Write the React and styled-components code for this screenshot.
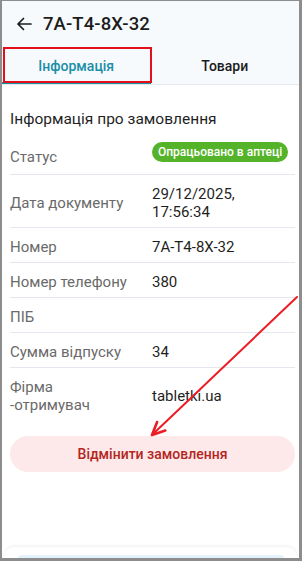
import React from 'react';
import styled, { createGlobalStyle } from 'styled-components';

const GlobalStyle = createGlobalStyle`
  html, body {
    margin: 0;
    padding: 0;
    background: #ffffff;
  }
  body {
    font-family: Roboto, 'Noto Sans', 'Liberation Sans', sans-serif;
    -webkit-font-smoothing: antialiased;
  }
`;

const rows = [
  { label: 'Дата документу', value: '29/12/2025,\n17:56:34' },
  { label: 'Номер', value: '7A-T4-8X-32' },
  { label: 'Номер телефону', value: '380' },
  { label: 'ПІБ', value: '' },
  { label: 'Сумма відпуску', value: '34' },
  { label: 'Фірма\n-отримувач', value: 'tabletki.ua' },
];

const ArrowLeft = () => (
  <svg width="16" height="16" viewBox="0 0 16 16" fill="none">
    <path d="M15 8H2M7.5 2.5L2 8l5.5 5.5" stroke="#1c1c1c" strokeWidth="1.7" strokeLinecap="round" strokeLinejoin="round" />
  </svg>
);

const App = () => {
  return (
    <>
      <GlobalStyle />
      <Frame>
        <Header>
          <TitleRow>
            <ArrowLeft />
            <Title>7A-T4-8X-32</Title>
          </TitleRow>
          <Tabs>
            <Tab $active>
              Інформація
              <Highlight />
            </Tab>
            <Tab>Товари</Tab>
          </Tabs>
        </Header>

        <Content>
          <SectionTitle>Інформація про замовлення</SectionTitle>
          <List>
            <StatusRow>
              <Label>Статус</Label>
              <Badge>Опрацьовано в аптеці</Badge>
            </StatusRow>
            {rows.map((r, i) => (
              <Row key={i} $last={i === rows.length - 1}>
                <Label>{r.label}</Label>
                <Value>{r.value}</Value>
              </Row>
            ))}
          </List>
          <CancelButton>Відмінити замовлення</CancelButton>
        </Content>

        <BottomCard>
          <BottomBar />
        </BottomCard>

        <Annotation width="297" height="557" viewBox="0 0 297 557">
          <line x1="295" y1="296" x2="151" y2="433" stroke="#ec1c24" strokeWidth="2" strokeLinecap="round" />
          <polyline points="163.3,429.5 150,434 155.1,421" fill="none" stroke="#ec1c24" strokeWidth="2.6" strokeLinecap="round" strokeLinejoin="round" />
        </Annotation>
      </Frame>
    </>
  );
};

const Frame = styled.div`
  position: relative;
  box-sizing: border-box;
  width: 302px;
  height: 561px;
  border-style: solid;
  border-color: #8d8d8d;
  border-width: 1px 3px 3px 2px;
  background: #ffffff;
  display: flex;
  flex-direction: column;
  overflow: hidden;
`;

const Header = styled.div`
  background: #f6fafd;
  border-bottom: 1px solid #e6e9ee;
`;

const TitleRow = styled.div`
  height: 46px;
  display: flex;
  align-items: center;
  gap: 11px;
  padding-left: 14px;
  box-sizing: border-box;
  padding-bottom: 1px;
`;

const Title = styled.div`
  font-size: 18.5px;
  font-weight: 500;
  color: #1c1c1c;
  letter-spacing: 0.1px;
`;

const Tabs = styled.div`
  display: grid;
  grid-template-columns: 1fr 1fr;
  height: 37px;
`;

const Tab = styled.div`
  position: relative;
  display: flex;
  align-items: center;
  justify-content: center;
  font-size: 14px;
  font-weight: 500;
  color: ${p => (p.$active ? '#1b8ea8' : '#1c1c1c')};
  &::after {
    content: '';
    position: absolute;
    left: 0;
    right: 0;
    bottom: 0;
    height: 2px;
    background: ${p => (p.$active ? '#1b8ea8' : 'transparent')};
  }
`;

const Highlight = styled.span`
  position: absolute;
  top: 0;
  left: 1px;
  right: -1px;
  bottom: 1px;
  border: 2px solid #e3101a;
  z-index: 2;
`;

const Content = styled.div`
  padding: 22px 4px 0 8px;
`;

const SectionTitle = styled.div`
  font-size: 15.5px;
  line-height: 24px;
  color: #1f1f1f;
  margin-bottom: 2px;
`;

const List = styled.div`
  display: flex;
  flex-direction: column;
`;

const Row = styled.div`
  display: grid;
  grid-template-columns: 142px 1fr;
  align-items: center;
  padding: 10px 0 6px;
  border-bottom: ${p => (p.$last ? 'none' : '1px solid #e4e7ee')};
  font-size: 15px;
  line-height: 18px;
`;

const StatusRow = styled(Row)`
  align-items: end;
  padding: 9px 0 8px;
`;

const Label = styled.div`
  color: #6a6a6a;
  white-space: pre-line;
`;

const Value = styled.div`
  color: #1f1f1f;
  white-space: pre-line;
  min-height: 18px;
`;

const Badge = styled.div`
  justify-self: start;
  margin-bottom: 4px;
  height: 20px;
  line-height: 20px;
  padding: 0 6px;
  border-radius: 10px;
  background: #55b32a;
  color: #ffffff;
  font-size: 12px;
  font-weight: 500;
`;

const CancelButton = styled.div`
  margin-top: 16px;
  height: 36px;
  border-radius: 18px;
  background: #fde9e9;
  color: #b3261e;
  font-size: 14px;
  font-weight: 500;
  display: flex;
  align-items: center;
  justify-content: center;
`;

const BottomCard = styled.div`
  margin: auto 2px 0;
  height: 11px;
  border-radius: 10px 10px 0 0;
  background: #ffffff;
  box-shadow: 0 -1px 3px rgba(0, 0, 0, 0.07);
  display: flex;
  align-items: flex-end;
  justify-content: center;
`;

const BottomBar = styled.div`
  width: 266px;
  height: 3px;
  border-radius: 6px 6px 0 0;
  background: #e4f2fb;
`;

const Annotation = styled.svg`
  position: absolute;
  top: 0;
  left: 0;
  pointer-events: none;
  z-index: 5;
`;

export default App;
